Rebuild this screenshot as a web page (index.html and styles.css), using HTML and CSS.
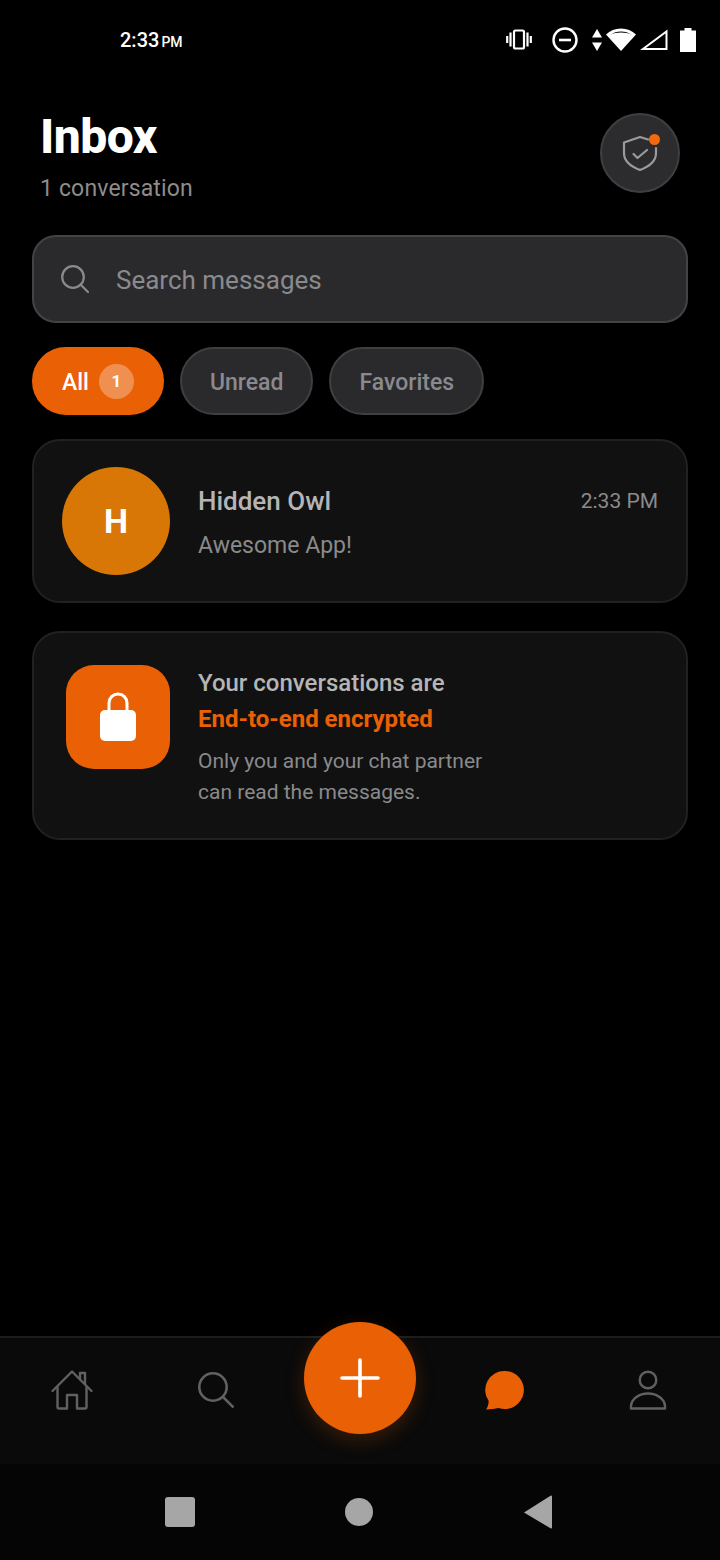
FILE: index.html
```html
<!DOCTYPE html>
<html lang="en">
<head>
    <meta charset="UTF-8">
    <meta name="viewport" content="width=device-width, initial-scale=1.0">
    <title>Inbox</title>
    <link rel="stylesheet" href="styles.css">
</head>
<body>
    <div class="status-bar">
        <div class="clock">2:33<span class="ampm">PM</span></div>
        <div class="status-icons">
            <svg width="26" height="22" viewBox="0 0 26 22" fill="none" stroke="#fff" stroke-width="2.200">
                <rect x="8" y="1.500" width="10" height="18" rx="1.500"/>
                <path d="M4.500 3.500v14M1.200 7v7M21.500 3.500v14M24.800 7v7"/>
            </svg>
            <svg class="dnd" width="26" height="26" viewBox="0 0 26 26" fill="none" stroke="#fff">
                <circle cx="13" cy="13" r="11.500" stroke-width="2.400"/>
                <path d="M7 13h12" stroke-width="2.600"/>
            </svg>
            <svg class="arrows" width="10" height="22" viewBox="0 0 10 22" fill="#fff">
                <path d="M5 0l5 8.500H0zM5 22L0 13.500h10z"/>
            </svg>
            <svg class="wifi" width="30" height="24" viewBox="0 0 30 24" fill="#fff">
                <path d="M15 23L0 6.500C4 2.600 9.200 .5 15 .5s11 2.100 15 6z"/>
                <path d="M4.300 6.800C7.300 4.700 11 3.500 15 3.500s7.700 1.200 10.700 3.300C22.700 5.200 19 4.500 15 4.500s-7.700.7-10.700 2.300z" fill="#000"/>
            </svg>
            <svg class="signal" width="28" height="22" viewBox="0 0 28 22" fill="none" stroke="#fff" stroke-width="2">
                <path d="M26.500 2.500v17.500H3z"/>
            </svg>
            <svg class="battery" width="16" height="24" viewBox="0 0 16 24" fill="#fff">
                <path d="M4.500 0h7v2.500H16V24H0V2.500h4.500z"/>
            </svg>
        </div>
    </div>

    <div class="content">
        <div class="header">
            <div>
                <h1 class="title">Inbox</h1>
                <div class="subtitle">1 conversation</div>
            </div>
            <div class="shield-btn">
                <svg width="38" height="36" viewBox="0 0 38 36" fill="none" stroke="#9b9b9b" stroke-width="2.200" stroke-linecap="round" stroke-linejoin="round">
                    <path d="M27 4.500L19 2 3 7.500v10.500c0 7.500 6.500 13.500 16 17 9.500-3.500 16-9.500 16-17v-5"/>
                    <path d="M12.500 19l4 4 9.500-8"/>
                </svg>
                <span class="shield-dot"></span>
            </div>
        </div>

        <div class="search">
            <svg width="28" height="28" viewBox="0 0 28 28" fill="none" stroke="#8a8a8e" stroke-width="2.200" stroke-linecap="round">
                <circle cx="12" cy="12" r="10.800"/>
                <path d="M20 20l7 7"/>
            </svg>
            <span class="search-text">Search messages</span>
        </div>

        <div class="chips">
            <div class="chip active">All <span class="chip-count">1</span></div>
            <div class="chip">Unread</div>
            <div class="chip">Favorites</div>
        </div>

        <div class="card convo">
            <div class="avatar">H</div>
            <div class="convo-body">
                <div class="convo-top">
                    <span class="convo-name">Hidden Owl</span>
                    <span class="convo-time">2:33 PM</span>
                </div>
                <div class="convo-msg">Awesome App!</div>
            </div>
        </div>

        <div class="card notice">
            <div class="lock-tile">
                <svg width="38" height="50" viewBox="0 0 38 50" fill="none">
                    <path d="M10 22V11a9 9 0 0 1 18 0v11" stroke="#fff" stroke-width="3"/>
                    <rect x="1" y="18" width="36" height="31" rx="5" fill="#fff"/>
                </svg>
            </div>
            <div class="notice-text">
                <div class="notice-title">Your conversations are</div>
                <div class="notice-accent">End-to-end encrypted</div>
                <div class="notice-desc">Only you and your chat partner<br>can read the messages.</div>
            </div>
        </div>
    </div>

    <div class="tabbar">
        <div class="tab">
            <svg width="42" height="40" viewBox="0 0 42 40" fill="none" stroke="#616161" stroke-width="2.400" stroke-linejoin="round" stroke-linecap="round">
                <path d="M1.500 21L21 1.500 40.500 21"/>
                <path d="M6.500 17v20a1.500 1.500 0 0 0 1.500 1.500h8V25h10v13.500h8a1.500 1.500 0 0 0 1.500-1.500V17"/>
                <path d="M29 9V3h5v11"/>
            </svg>
        </div>
        <div class="tab">
            <svg width="36" height="36" viewBox="0 0 36 36" fill="none" stroke="#616161" stroke-width="2.600" stroke-linecap="round">
                <circle cx="15" cy="15" r="13.700"/>
                <path d="M25 25l9.700 9.700"/>
            </svg>
        </div>
        <div class="tab fab-slot">
            <div class="fab">
                <svg width="40" height="40" viewBox="0 0 40 40" stroke="#fff" stroke-width="3.600" stroke-linecap="round">
                    <path d="M20 2v36M2 20h36"/>
                </svg>
            </div>
        </div>
        <div class="tab">
            <svg width="40" height="40" viewBox="0 0 40 40" fill="#ea6005">
                <path d="M21 1a19 19 0 1 1-6.500 36.900C11 38.800 7 39 2 39.500c1.500-2 2.500-4.500 2.700-8.500A19 19 0 0 1 21 1z"/>
            </svg>
        </div>
        <div class="tab">
            <svg width="38" height="40" viewBox="0 0 38 40" fill="none" stroke="#616161" stroke-width="2.400">
                <circle cx="19" cy="10" r="8.300"/>
                <path d="M2 38.500v-2C2 29 10 23.500 19 23.500S36 29 36 36.500v2z" stroke-linejoin="round"/>
            </svg>
        </div>
    </div>

    <div class="android-nav">
        <span class="nav-square"></span>
        <span class="nav-circle"></span>
        <svg width="30" height="34" viewBox="0 0 30 34" fill="#a6a6a6">
            <path d="M29 1.500v31a1 1 0 0 1-1.500.8L1 17.500 27.500 .7A1 1 0 0 1 29 1.500z"/>
        </svg>
    </div>
</body>
</html>
```

FILE: styles.css
```css
* {
    box-sizing: border-box;
}

body {
    margin: 0;
    width: 720px;
    height: 1560px;
    display: flex;
    flex-direction: column;
    background-color: #000;
    font-family: Roboto, "Noto Sans", sans-serif;
    overflow: hidden;
}

/* Status bar */
.status-bar {
    height: 80px;
    display: flex;
    align-items: center;
    justify-content: space-between;
    padding: 0 24px 0 120px;
    color: #fff;
}

.clock {
    font-size: 20px;
    font-weight: 500;
}

.ampm {
    font-size: 14px;
    margin-left: 2px;
}

.status-icons {
    display: flex;
    align-items: center;
}

.dnd { margin-left: 20px; }
.arrows { margin-left: 14px; }
.wifi { margin-left: 4px; }
.signal { margin-left: 4px; }
.battery { margin-left: 12px; }

/* Main column */
.content {
    padding: 0 32px;
    display: flex;
    flex-direction: column;
}

.header {
    display: flex;
    justify-content: space-between;
    align-items: flex-start;
    padding: 33px 8px 0;
    height: 155px;
}

.title {
    margin: 0;
    font-size: 48px;
    line-height: 48px;
    font-weight: 800;
    letter-spacing: -0.5px;
    color: #fff;
}

.subtitle {
    margin-top: 15px;
    font-size: 23px;
    line-height: 26px;
    letter-spacing: 0.15px;
    color: #8c8c8c;
}

.shield-btn {
    position: relative;
    width: 80px;
    height: 80px;
    border-radius: 50%;
    background: #2c2c2e;
    border: 2px solid #3f3f42;
    display: flex;
    align-items: center;
    justify-content: center;
}

.shield-dot {
    position: absolute;
    top: 19px;
    right: 18px;
    width: 11px;
    height: 11px;
    border-radius: 50%;
    background: #f26a0f;
}

.search {
    height: 88px;
    display: flex;
    align-items: center;
    gap: 27px;
    padding: 0 27px;
    background: #2a2a2c;
    border: 2px solid #434345;
    border-radius: 24px;
    font-size: 26px;
    color: #8a8a8e;
}

.search-text {
    margin-top: 2px;
}

.chips {
    display: flex;
    gap: 16px;
    margin-top: 24px;
}

.chip {
    height: 68px;
    padding: 2px 28px 0;
    display: flex;
    align-items: center;
    gap: 10px;
    border-radius: 34px;
    background: #2a2a2c;
    border: 2px solid #3f3f42;
    font-size: 23px;
    font-weight: 500;
    color: #8a8a8e;
}

.chip.active {
    background: #ea6005;
    border-color: #ea6005;
    color: #fff;
}

.chip-count {
    width: 35px;
    height: 35px;
    margin-top: -2px;
    border-radius: 50%;
    background: rgba(255, 255, 255, 0.3);
    display: flex;
    align-items: center;
    justify-content: center;
    font-size: 17px;
    font-weight: 700;
}

.card {
    display: flex;
    background: #111112;
    border: 2px solid #212122;
    border-radius: 28px;
}

.convo {
    height: 164px;
    margin-top: 24px;
    padding: 26px 28px;
    align-items: center;
}

.avatar {
    width: 108px;
    height: 108px;
    flex-shrink: 0;
    border-radius: 50%;
    background: #d97706;
    display: flex;
    align-items: center;
    justify-content: center;
    color: #fff;
    font-size: 34px;
    font-weight: 700;
}

.convo-body {
    flex: 1;
    margin-left: 28px;
    padding-top: 3px;
}

.convo-top {
    display: flex;
    justify-content: space-between;
    align-items: center;
}

.convo-name {
    font-size: 26px;
    font-weight: 500;
    color: #b5b5b5;
}

.convo-time {
    font-size: 21px;
    color: #8a8a8a;
}

.convo-msg {
    margin-top: 16px;
    font-size: 23px;
    color: #8a8a8a;
}

.notice {
    height: 209px;
    margin-top: 28px;
    padding: 32px 32px;
}

.lock-tile {
    width: 104px;
    height: 104px;
    flex-shrink: 0;
    border-radius: 28px;
    background: #ea6005;
    display: flex;
    align-items: center;
    justify-content: center;
}

.notice-text {
    margin-left: 28px;
}

.notice-title {
    font-size: 24px;
    line-height: 36px;
    font-weight: 500;
    color: #b5b5b5;
}

.notice-accent {
    font-size: 24px;
    line-height: 36px;
    font-weight: 700;
    color: #ea6005;
}

.notice-desc {
    margin-top: 9px;
    font-size: 21px;
    line-height: 31px;
    color: #8a8a8a;
}

/* Bottom tabs */
.tabbar {
    margin-top: auto;
    height: 128px;
    display: flex;
    background: #0a0a0a;
    border-top: 2px solid #1c1c1c;
    padding: 0 0 22px;
}

.tab {
    flex: 1;
    display: flex;
    align-items: center;
    justify-content: center;
}

.fab-slot {
    position: relative;
}

.fab {
    position: absolute;
    left: 50%;
    top: -16px;
    margin-left: -56px;
    width: 112px;
    height: 112px;
    border-radius: 50%;
    background: #ea6005;
    display: flex;
    align-items: center;
    justify-content: center;
    box-shadow: 0 6px 20px rgba(234, 96, 5, 0.22);
}

/* Android nav */
.android-nav {
    height: 96px;
    background: #050505;
    display: flex;
    align-items: center;
    justify-content: space-between;
    padding: 0 167px 0 165px;
}

.nav-square {
    width: 30px;
    height: 30px;
    border-radius: 3px;
    background: #a6a6a6;
}

.nav-circle {
    width: 28px;
    height: 28px;
    border-radius: 50%;
    background: #a6a6a6;
}
```
